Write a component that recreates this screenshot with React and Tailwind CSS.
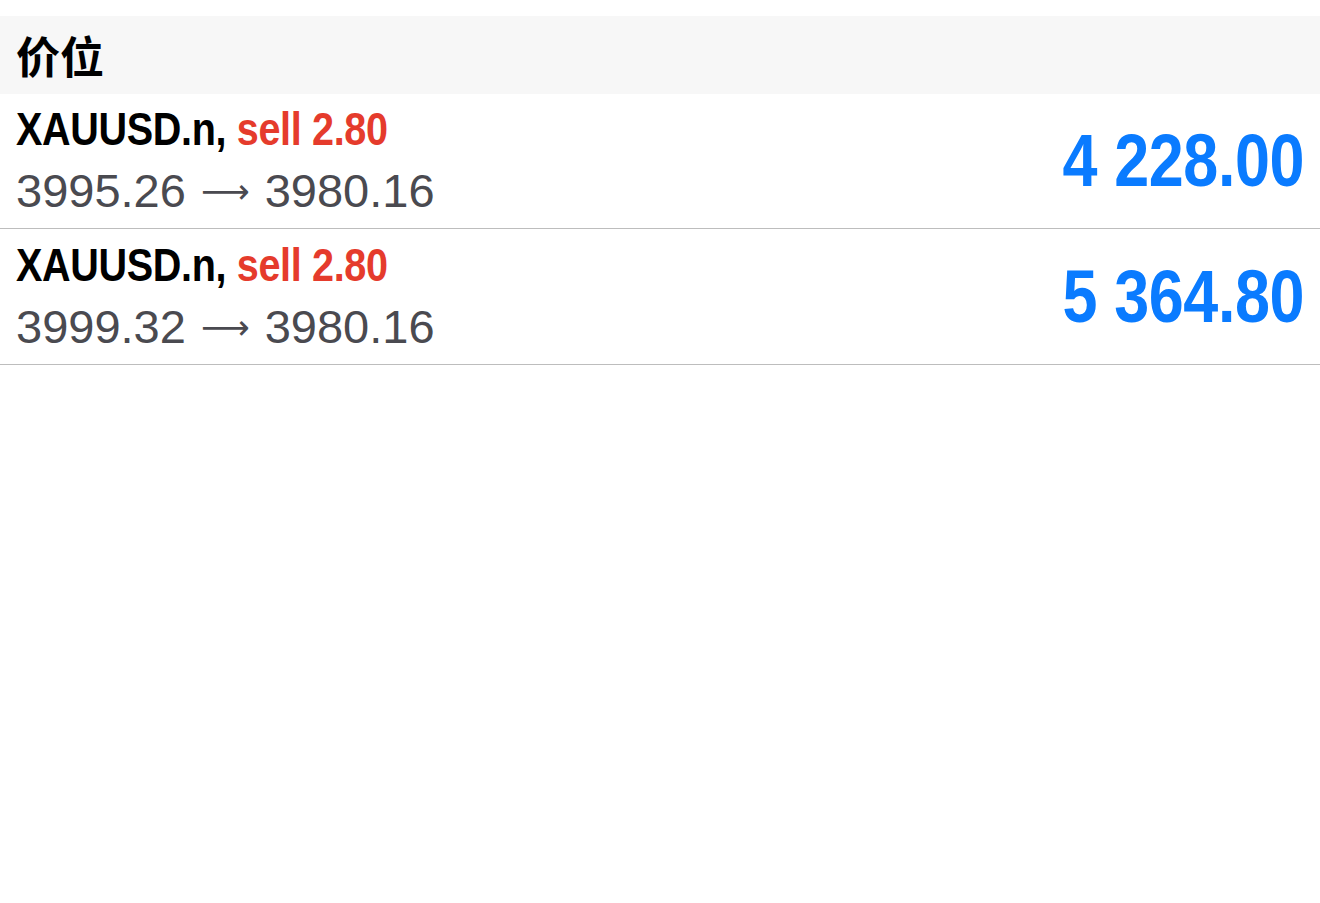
const rows = [
  { symbol: "XAUUSD.n,", side: "sell 2.80", from: "3995.26", to: "3980.16", profit: "4 228.00" },
  { symbol: "XAUUSD.n,", side: "sell 2.80", from: "3999.32", to: "3980.16", profit: "5 364.80" },
];

const sans = { fontFamily: '"Liberation Sans", "Noto Sans CJK SC", sans-serif' };

export default function App() {
  return (
    <div className="min-h-screen w-full bg-white pt-4">
      <div className="flex h-[78px] items-center bg-[#f7f7f7] px-4">
        <span className="text-[44px] font-bold leading-none text-black" style={{ fontFamily: '"Noto Sans CJK SC", sans-serif' }}>
          价位
        </span>
      </div>
      {rows.map((r, i) => (
        <div key={i} className="flex h-[135px] items-center justify-between border-b border-[#bdbdbd] pl-4 pr-4 last:h-[136px]">
          <div className="flex flex-col">
            <div
              className="inline-block origin-left scale-x-[0.86] whitespace-nowrap text-[46px] font-bold leading-[52px] tracking-[-0.4px]"
              style={sans}
            >
              <span className="text-black">{r.symbol}</span> <span className="text-[#e53b2c]">{r.side}</span>
            </div>
            <div className="mt-2 flex items-center whitespace-nowrap text-[47px] leading-[56px] text-[#4a4a50]" style={sans}>
              <span>{r.from}</span>
              <span className="mx-[15px] text-[34px] leading-none" style={{ fontFamily: '"DejaVu Sans", sans-serif' }}>⟶</span>
              <span>{r.to}</span>
            </div>
          </div>
          <div
            className="inline-block origin-right scale-x-[0.85] whitespace-nowrap text-[74px] font-bold leading-none tracking-[-0.5px] text-[#0a7bff]"
            style={sans}
          >
            {r.profit}
          </div>
        </div>
      ))}
    </div>
  );
}
